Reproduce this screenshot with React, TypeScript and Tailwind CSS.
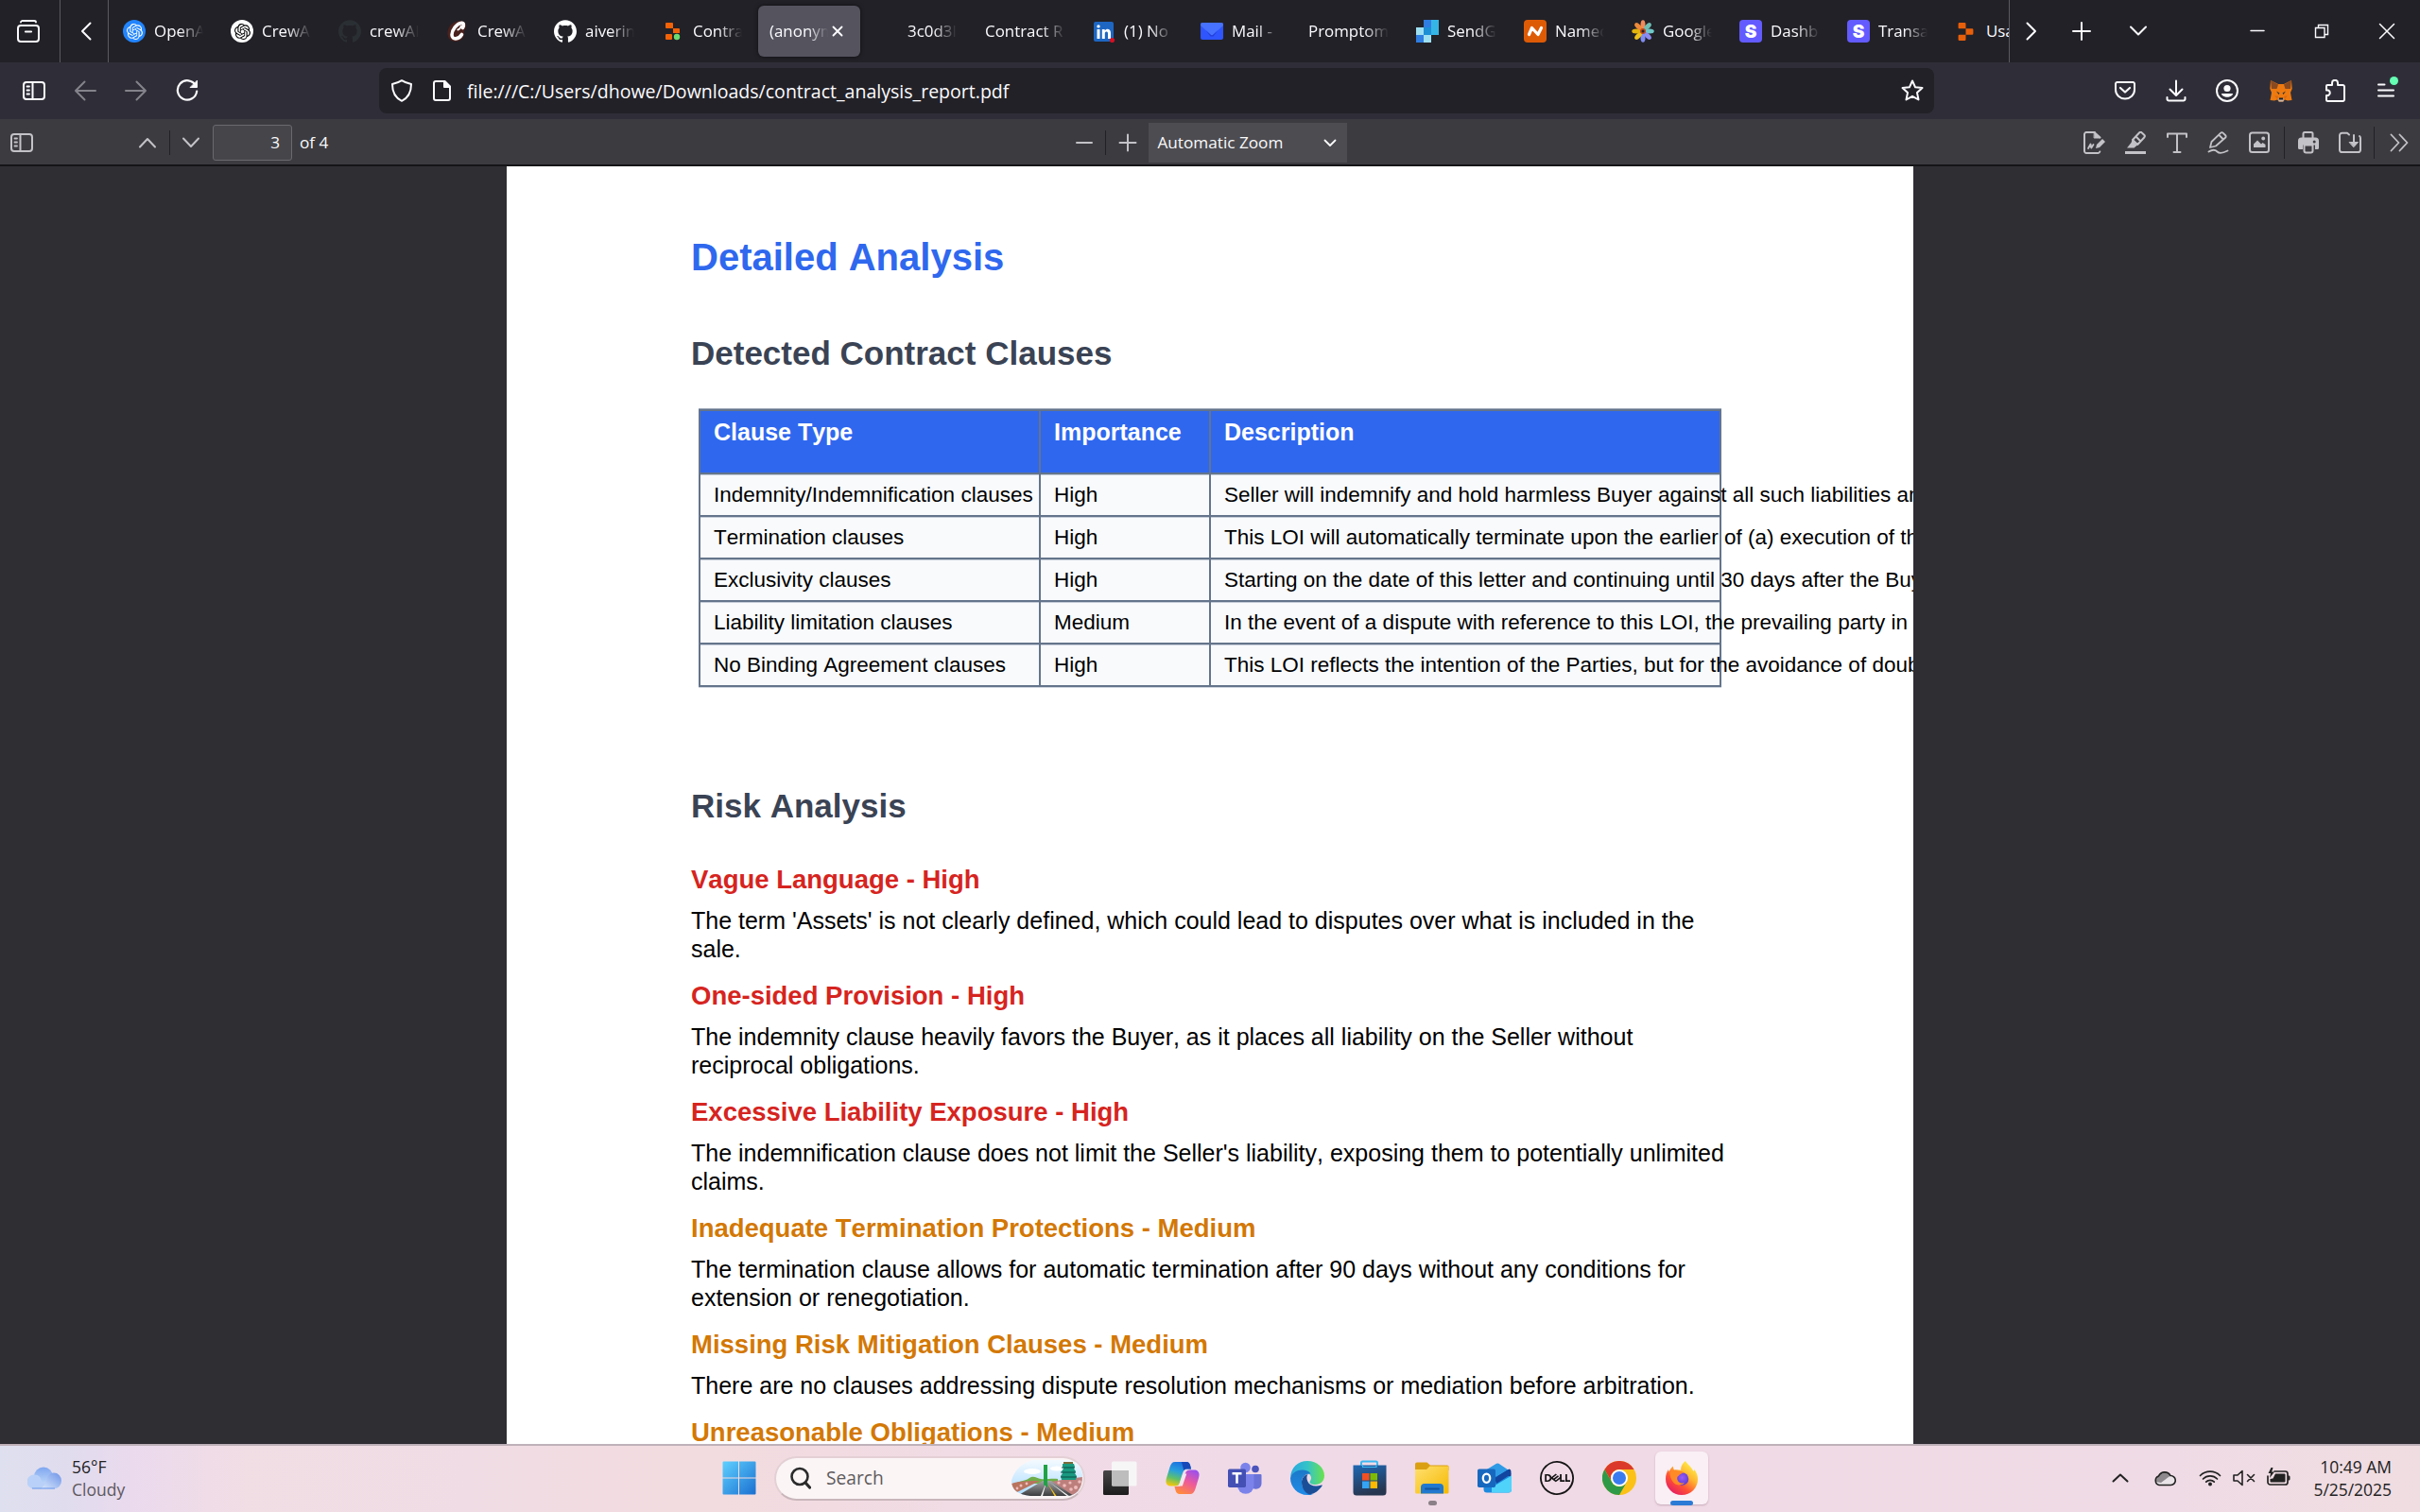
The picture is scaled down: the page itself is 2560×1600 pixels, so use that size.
import React from "react";
import { SiOpenai, SiDell, SiReplit, SiGithub } from "react-icons/si";

type SvgProps = {
  w?: number;
  h?: number;
  vb?: string;
  className?: string;
  children: React.ReactNode;
};

/* Stroke-based glyph on a pixel grid, coloured through currentColor */
function Glyph({ w = 24, h = 24, vb, className = "", children }: SvgProps) {
  return (
    <svg
      width={w}
      height={h}
      viewBox={vb ?? `0 0 ${w} ${h}`}
      className={`shrink-0 ${className}`}
      fill="none"
      stroke="currentColor"
      strokeWidth="2"
      strokeLinecap="round"
      strokeLinejoin="round"
    >
      {children}
    </svg>
  );
}

/* ------------------------------ favicons ------------------------------ */

function ContractFav() {
  return (
    <Glyph className="-ml-0.5">
      <g stroke="none">
        <path d="M7 3h6a1 1 0 0 1 1 1v5H7a1 1 0 0 1-1-1V4a1 1 0 0 1 1-1z" fill="#f26207" />
        <path d="M14 9h6a1 1 0 0 1 1 1v4h-7z" fill="#f26207" />
        <rect x="6" y="15" width="7" height="6" rx="1" fill="#f26207" />
        <circle cx="18" cy="18" r="3.2" fill="#6bdc6f" />
      </g>
    </Glyph>
  );
}

function CrewFav() {
  return (
    <span className="flex size-6 items-center justify-center">
      <Glyph>
        <path d="M8 3C13 0 21 .5 21 6c0 3-2 4-2 7s0 7-6 9.500C7 24 1.500 21 1.500 15S4 5.500 8 3z" fill="#4a211d" stroke="none" />
        <path d="M17.500 8.500c1.600-3 1-5.500-1.200-5.300C11 3.700 6 11 6 15.800c0 6 7.500 5 10.500-.3" stroke="#fff" strokeWidth="3.600" />
        <path d="M16 6.500c-.8 2-2.400 3.600-3.600 4" stroke="#fff" strokeWidth="2" />
      </Glyph>
    </span>
  );
}

function LinkedInFav() {
  return (
    <Glyph>
      <g stroke="none">
        <rect x="1" y="2" width="21" height="21" rx="2" fill="#1d66c2" />
        <path d="M4.500 10h3v10h-3zM6 5.200a1.700 1.700 0 1 1 0 3.400 1.700 1.700 0 0 1 0-3.400zM9.800 10h2.900v1.400c1.700-2.500 6.300-2.200 6.300 2.300V20h-3v-5.600c0-2.600-3.200-2.300-3.200 0V20h-3z" fill="#fff" />
        <circle cx="20.500" cy="21.500" r="2.600" fill="#d11124" />
      </g>
    </Glyph>
  );
}

function MailFav() {
  return (
    <Glyph>
      <g stroke="none">
        <rect x="0" y="3" width="24" height="18" rx="2" fill="#2f55ff" />
        <path d="M2 3h20a2 2 0 0 1 2 2v1L13.500 15.500a2 2 0 0 1-3 0L0 6V5a2 2 0 0 1 2-2z" fill="#4672ff" />
        <path d="M5.500 11l5 4.500a2 2 0 0 0 3 0l5-4.500-5 6.500h-3z" fill="#2340d6" />
      </g>
    </Glyph>
  );
}

function SendGridFav() {
  return (
    <Glyph>
      <g stroke="none">
        <path d="M8 0h8v8H8z" fill="#2f7de1" />
        <path d="M16 0h8v8h-8z" fill="#35b5e6" />
        <path d="M0 8h8v8H0z" fill="#9fdff2" />
        <path d="M8 8h8v8H8z" fill="#1c8fd6" />
        <path d="M16 8h8v8h-8z" fill="#35b5e6" />
        <path d="M0 16h8v8H0z" fill="#2f7de1" />
        <path d="M8 16h8v8H8z" fill="#9fdff2" />
      </g>
    </Glyph>
  );
}

function NamecheapFav() {
  return (
    <Glyph>
      <rect width="24" height="24" rx="4" fill="#de5b06" stroke="none" />
      <path d="M5.500 15.500 8.500 8.500l6.500 7L18.500 8.500" stroke="#fff" strokeWidth="3.200" />
    </Glyph>
  );
}

const petals = ["#f28b5a", "#6fbfb4", "#6fc7c9", "#8c8cf0", "#7f8cf2", "#eec21b", "#e3b40c", "#ee8a3a"];

function PetalsFav() {
  return (
    <Glyph>
      <g stroke="none">
        {petals.map((c, i) => (
          <ellipse key={i} cx="12" cy="5" rx="2.500" ry="4.800" fill={c} transform={`rotate(${i * 45} 12 12)`} />
        ))}
        <circle cx="12" cy="12" r="3" fill="#c2491d" />
        <circle cx="12" cy="12" r="1.500" fill="#222127" />
      </g>
    </Glyph>
  );
}

function StripeFav() {
  return (
    <span className="flex size-6 items-center justify-center rounded bg-[#635bff] font-['Inter',sans-serif] text-[19px] leading-none font-black text-white">
      S
    </span>
  );
}

/* -------------------------------- tabs -------------------------------- */

type TabInfo = { label: string; icon?: React.ReactNode; gap?: boolean };

const leftTabs: TabInfo[] = [
  {
    label: "OpenAI",
    icon: (
      <span className="flex size-6 items-center justify-center rounded-full bg-[#2285ff]">
        <SiOpenai className="size-[17px] text-white" />
      </span>
    ),
  },
  {
    label: "CrewAI",
    icon: (
      <span className="flex size-6 items-center justify-center rounded-full bg-white">
        <SiOpenai className="size-[17px] text-black" />
      </span>
    ),
  },
  { label: "crewAI", icon: <SiGithub className="size-6 text-[#2a2f34]" /> },
  { label: "CrewAI", icon: <CrewFav /> },
  { label: "aiverin", icon: <SiGithub className="size-6 text-white" /> },
  { label: "Contrac", icon: <ContractFav /> },
];

const rightTabs: TabInfo[] = [
  { label: "3c0d3l", gap: true },
  { label: "Contract R" },
  { label: "(1) No", icon: <LinkedInFav /> },
  { label: "Mail -", icon: <MailFav /> },
  { label: "Promptom" },
  { label: "SendG", icon: <SendGridFav /> },
  { label: "Namec", icon: <NamecheapFav /> },
  { label: "Google", icon: <PetalsFav /> },
  { label: "Dashb", icon: <StripeFav /> },
  { label: "Transa", icon: <StripeFav /> },
];

function Tab({ label, icon, gap }: TabInfo) {
  return (
    <div className="flex h-full w-[114px] shrink-0 items-center pl-3">
      {icon && <div className="mr-[9px] flex w-6 shrink-0">{icon}</div>}
      {gap && <div className="w-8 shrink-0" />}
      <span
        className={
          icon || gap
            ? "w-[52px] overflow-hidden whitespace-nowrap [mask-image:linear-gradient(to_right,black_52%,transparent)]"
            : "w-[85px] overflow-hidden whitespace-nowrap [mask-image:linear-gradient(to_right,black_70%,transparent)]"
        }
      >
        {label}
      </span>
    </div>
  );
}

function TabBar() {
  return (
    <div className="flex h-[66px] items-center bg-[#222127] text-[16.900px] text-[#fbfbfe]">
      <Glyph className="ml-[18px]">
        <path d="M4 2.500C4 1.500 5 1 6 1h12c1 0 2 .5 2 1.500" strokeWidth="1.800" />
        <rect x="1" y="6" width="22" height="17" rx="3" />
        <path d="M9 12.500h6" strokeWidth="2.200" />
      </Glyph>
      <div className="ml-[21px] h-full w-px bg-[#5b5a62]" />
      <Glyph w={12} h={20} className="ml-[21px]">
        <path d="M10.500 1.500 2 10l8.500 8.500" />
      </Glyph>
      <div className="ml-[17px] h-full w-px bg-[#5b5a62]" />
      <div className="flex h-full w-[2010px] shrink-0 overflow-hidden pl-[3px]">
        {leftTabs.map((t, i) => (
          <Tab key={i} {...t} />
        ))}
        <div className="flex h-full w-[114px] shrink-0 items-center">
          <div className="flex h-[54px] w-[108px] items-center rounded-md bg-[#54535e] pl-3 shadow-[0_0_4px_rgba(0,0,0,0.6)]">
            <span className="w-[62px] overflow-hidden whitespace-nowrap [mask-image:linear-gradient(to_right,black_65%,transparent)]">
              (anonym
            </span>
            <Glyph w={12} h={12} className="ml-1">
              <path d="M1.500 1.500l9 9M10.500 1.500l-9 9" strokeWidth="1.900" />
            </Glyph>
          </div>
        </div>
        {rightTabs.map((t, i) => (
          <Tab key={i} {...t} />
        ))}
        <div className="flex h-full w-[114px] shrink-0 items-center pl-3">
          <SiReplit className="mr-[12px] ml-[2px] size-[19px] shrink-0 text-[#e85f0a]" />
          <span className="whitespace-nowrap">Usag</span>
        </div>
      </div>
      <div className="h-full w-px bg-[#5b5a62]" />
      <Glyph w={12} h={20} className="ml-[17px]">
        <path d="M1.500 1.500 10 10l-8.500 8.500" />
      </Glyph>
      <Glyph w={20} h={20} className="ml-[37px]">
        <path d="M10 1v18M1 10h18" />
      </Glyph>
      <Glyph w={20} h={12} className="ml-[40px]">
        <path d="M2 1.500l8 8 8-8" />
      </Glyph>
      <Glyph w={16} h={16} className="ml-[108px]">
        <path d="M1 7.500h14" strokeWidth="1.500" />
      </Glyph>
      <Glyph w={16} h={16} className="ml-[52px]">
        <path d="M1.500 4.500h9.500v10H1.500zM4.500 4V1.500H14.500v10h-3" strokeWidth="1.400" strokeLinecap="butt" strokeLinejoin="miter" />
      </Glyph>
      <Glyph w={18} h={18} className="ml-[52px]">
        <path d="M1.500 1.500l15 15M16.500 1.500l-15 15" strokeWidth="1.500" />
      </Glyph>
    </div>
  );
}

/* ----------------------------- navigation ----------------------------- */

function SidebarIcon({ className = "" }: { className?: string }) {
  return (
    <Glyph w={24} h={20} className={className}>
      <rect x="1" y="1" width="22" height="18" rx="3" />
      <path d="M10.500 1v18" />
      <path d="M4.500 5.500h2.500M4.500 9.500h2.500M4.500 13.500h2.500" strokeWidth="1.800" />
    </Glyph>
  );
}

function MetaMaskIcon() {
  return (
    <Glyph>
      <g stroke="none">
        <path d="M1 1 9 5h6l8-4 .7 9L22 14l1.500 8-4.500.5-3-1-2 2h-4l-2-2-3 1L.5 22 2 14 .3 10z" fill="#ee7a10" />
        <path d="M1 1 9 5.500 7.500 10 2 10zM23 1 15 5.500l1.500 4.500h5.500z" fill="#8a4a20" />
        <path d="M7 12.500l3.500 2-1 1.500zM17 12.500l-3.500 2 1 1.500z" fill="#2b3440" />
        <path d="M5 17l4 1-1 3zM19 17l-4 1 1 3z" fill="#d96a12" />
        <path d="M9 20h6l-.5 3.500h-5z" fill="#c9b8ab" />
        <path d="M10 19.500h4l.4 2H9.600z" fill="#1d1f24" />
      </g>
    </Glyph>
  );
}

function NavBar() {
  return (
    <div className="flex h-[60px] items-center bg-[#2f2e38] text-[#fbfbfe]">
      <SidebarIcon className="ml-6" />
      <Glyph className="ml-[30px] text-[#84838b]">
        <path d="M23 12H2M11.500 2.500 2 12l9.500 9.500" />
      </Glyph>
      <Glyph className="ml-[30px] text-[#84838b]">
        <path d="M1 12h21M12.500 2.500 22 12l-9.500 9.500" />
      </Glyph>
      <Glyph className="ml-[30px]">
        <path d="M21 6.500A10.200 10.200 0 1 0 22.200 12.500" strokeWidth="2.200" />
        <path d="M22.500 1.500v7h-7z" fill="currentColor" strokeWidth="1" />
      </Glyph>
      <div className="ml-[191px] flex h-12 w-[1645px] shrink-0 items-center rounded-lg bg-[#222127]">
        <Glyph className="ml-3">
          <path d="M12 1.200c3 2 6 3 10 3.800 0 8-3 14.500-10 17.800C5 19.500 2 13 2 5c4-.8 7-1.800 10-3.800z" />
        </Glyph>
        <Glyph className="ml-[18px]">
          <path d="M6 2h9.500L21 7.500V20a2 2 0 0 1-2 2H6a2 2 0 0 1-2-2V4a2 2 0 0 1 2-2z" />
          <path d="M15 2v6h6z" fill="currentColor" />
        </Glyph>
        <span className="ml-[15px] pt-0.5 text-[19.560px] whitespace-nowrap">
          file:///C:/Users/dhowe/Downloads/contract_analysis_report.pdf
        </span>
        <Glyph className="mr-[11px] ml-auto">
          <path d="M12 1.500l3.100 6.800 7.400.8-5.500 5 1.500 7.400L12 17.800l-6.500 3.700L7 14.100l-5.500-5 7.400-.8z" />
        </Glyph>
      </div>
      <div className="ml-[175px] flex items-center">
        <div className="flex w-[54px] justify-center">
          <Glyph>
            <path d="M3.500 3h17A1.800 1.800 0 0 1 22 4.500V11a10 9.500 0 0 1-20 0V4.500A1.800 1.800 0 0 1 3.500 3z" />
            <path d="M7 9l5 4.500L17 9" strokeWidth="2.200" />
          </Glyph>
        </div>
        <div className="flex w-[54px] justify-center">
          <Glyph>
            <path d="M12 1.500v15M5.500 10.500l6.500 6.500 6.500-6.500M2.500 19v1.500A1.800 1.800 0 0 0 4.500 22.500h15a1.800 1.800 0 0 0 2-2V19" />
          </Glyph>
        </div>
        <div className="flex w-[54px] justify-center">
          <Glyph>
            <circle cx="12" cy="12" r="11" />
            <circle cx="12" cy="9.500" r="3.600" fill="currentColor" stroke="none" />
            <path d="M6 15h12c0 2-3 3.800-6 3.800S6 17 6 15z" fill="currentColor" stroke="none" />
          </Glyph>
        </div>
        <div className="flex w-[60px] justify-center">
          <MetaMaskIcon />
        </div>
        <div className="flex w-[54px] justify-center">
          <Glyph>
            <path d="M4 6h5V3.800a3 3 0 0 1 6 0V6h5a1.800 1.800 0 0 1 2 2v13a1.800 1.800 0 0 1-2 2H4.500A1.500 1.500 0 0 1 3 21.500V17h2a3 3 0 0 0 0-5.500H3V7a1 1 0 0 1 1-1z" />
          </Glyph>
        </div>
        <div className="relative flex w-[54px] justify-center">
          <Glyph>
            <path d="M4 5.500h6.500M4 11.500h16M4 17.500h16" />
          </Glyph>
          <span className="absolute -top-[3px] right-[14px] size-[9px] rounded-full bg-[#65ffb4]" />
        </div>
      </div>
    </div>
  );
}

/* ----------------------------- pdf toolbar ---------------------------- */

function PdfToolbar() {
  return (
    <div className="flex h-[50px] items-center border-b-2 border-[#151417] bg-[#3c3b40] pt-0.5 text-[17.200px] text-[#f9f9fa]">
      <SidebarIcon className="ml-[11px] text-[#c3c2c6]" />
      <Glyph w={20} h={12} className="ml-[111px] text-[#c3c2c6]">
        <path d="M2 10.500l8-8.500 8 8.500" />
      </Glyph>
      <div className="ml-[13px] h-[26px] w-px bg-[#222127]" />
      <Glyph w={20} h={12} className="ml-[12px] text-[#c3c2c6]">
        <path d="M2 1.500l8 8.500 8-8.500" />
      </Glyph>
      <div className="ml-[13px] flex h-[38px] w-[84px] items-center justify-end rounded-[3px] border border-[#6a696e] bg-[#46454a] pr-3">3</div>
      <span className="ml-2">of 4</span>
      <Glyph w={20} h={20} className="ml-[790px] text-[#c3c2c6]">
        <path d="M2 10h16" />
      </Glyph>
      <div className="ml-[12px] h-[26px] w-px bg-[#222127]" />
      <Glyph w={20} h={20} className="ml-[13px] text-[#c3c2c6]">
        <path d="M10 1.500v17M1.500 10h17" />
      </Glyph>
      <div className="ml-[12px] flex h-[42px] w-[210px] items-center bg-[#4d4c51] pr-[11px] pl-[9px]">
        <span>Automatic Zoom</span>
        <Glyph w={14} h={9} className="ml-auto">
          <path d="M1.500 1.500l5.500 5.500 5.500-5.500" strokeWidth="1.800" />
        </Glyph>
      </div>
      <div className="mr-[12px] ml-auto flex items-center text-[#c3c2c6]">
        {/* signature */}
        <Glyph>
          <path d="M12 1H3.500A2.300 2.300 0 0 0 1 3.500v17A2.300 2.300 0 0 0 3.500 23H15a2.300 2.300 0 0 0 2.300-1.500M11.500 1l6 5.500" />
          <path d="M11.500 1l6 6h-6z" fill="currentColor" strokeWidth="1" />
          <path d="M5 18l2.500-4.500.8 4L10.500 14" strokeWidth="1.800" />
          <path d="M13 18l1-4 6-6 3 3-6 6z" fill="currentColor" stroke="none" />
        </Glyph>
        {/* highlight */}
        <Glyph className="ml-[19px]">
          <path d="M9 9l7-7.500a2 2 0 0 1 2.800 0l2.400 2.200a2 2 0 0 1 0 2.800l-7 7.500zM12.500 5.500l5 5" />
          <path d="M8.500 9l5.500 5.500-3.500 3H3l4.500-5.500z" fill="currentColor" stroke="none" />
          <path d="M1 22.500h22" strokeWidth="3" strokeLinecap="butt" />
        </Glyph>
        {/* text */}
        <Glyph className="ml-[20px]">
          <path d="M2 6V2.500h20V6M12 2.500v19M8.500 22h7" />
        </Glyph>
        {/* draw */}
        <Glyph className="ml-[20px]">
          <path d="M3 17l1.500-6L14 1.800a2 2 0 0 1 2.800 0l2.200 2.200a2 2 0 0 1 0 2.800L9 15.500zM12.500 4l4.500 4.500" strokeWidth="1.800" />
          <path d="M1.500 21.500c4-2.500 7-2 9 0s6 1.500 11-1" strokeWidth="1.800" />
        </Glyph>
        {/* image */}
        <Glyph className="ml-[19px]">
          <rect x="2" y="1.500" width="20" height="20.500" rx="2.500" />
          <path d="M6 17v-3.500l4-4 4 4 1.500-1.500L18.500 14v3z" fill="currentColor" stroke="none" />
          <circle cx="16.200" cy="7.500" r="1.900" fill="currentColor" stroke="none" />
        </Glyph>
        <div className="ml-[14px] h-[34px] w-px bg-[#222127]" />
        {/* print */}
        <Glyph className="ml-[13px]">
          <path d="M6.500 8V2.500A1.500 1.500 0 0 1 8 1h7a1.500 1.500 0 0 1 1.500 1.500V8" />
          <path d="M4.500 6.500h15A3.500 3.500 0 0 1 23 10v7.500a1.500 1.500 0 0 1-1.500 1.500h-2.500v-4.500H6V19H2.500A1.500 1.500 0 0 1 1 17.500V10a3.500 3.500 0 0 1 3.500-3.500z" fill="currentColor" stroke="none" />
          <path d="M7.500 14.500h9v6a2 2 0 0 1-2 2h-5a2 2 0 0 1-2-2z" />
          <circle cx="18.200" cy="11" r="1.500" fill="#3c3b40" stroke="none" />
        </Glyph>
        {/* save */}
        <Glyph className="ml-[20px]">
          <path d="M11 3.500 9 1.800H3.500A2.500 2.500 0 0 0 1 4.300v15.500A2.500 2.500 0 0 0 3.500 22h17a2.500 2.500 0 0 0 2.500-2.200V7a2.500 2.500 0 0 0-1-2" />
          <path d="M16 4v10" />
          <path d="M11.500 11.500h9L16 16.500z" fill="currentColor" strokeWidth="1" />
        </Glyph>
        <div className="ml-[13px] h-[34px] w-px bg-[#222127]" />
        <Glyph w={20} h={20} className="ml-4">
          <path d="M1.500 1.500 9.500 10l-8 8.500M10.500 1.500l8 8.500-8 8.500" strokeWidth="1.800" />
        </Glyph>
      </div>
    </div>
  );
}

/* ------------------------------ document ------------------------------ */

const clauses = [
  ["Indemnity/Indemnification clauses", "High", "Seller will indemnify and hold harmless Buyer against all such liabilities and"],
  ["Termination clauses", "High", "This LOI will automatically terminate upon the earlier of (a) execution of the"],
  ["Exclusivity clauses", "High", "Starting on the date of this letter and continuing until 30 days after the Buyer"],
  ["Liability limitation clauses", "Medium", "In the event of a dispute with reference to this LOI, the prevailing party in"],
  ["No Binding Agreement clauses", "High", "This LOI reflects the intention of the Parties, but for the avoidance of doubt"],
];

type Risk = { title: string; level: "High" | "Medium"; lines: string[] };

const risks: Risk[] = [
  { title: "Vague Language", level: "High", lines: ["The term 'Assets' is not clearly defined, which could lead to disputes over what is included in the", "sale."] },
  { title: "One-sided Provision", level: "High", lines: ["The indemnity clause heavily favors the Buyer, as it places all liability on the Seller without", "reciprocal obligations."] },
  { title: "Excessive Liability Exposure", level: "High", lines: ["The indemnification clause does not limit the Seller's liability, exposing them to potentially unlimited", "claims."] },
  { title: "Inadequate Termination Protections", level: "Medium", lines: ["The termination clause allows for automatic termination after 90 days without any conditions for", "extension or renegotiation."] },
  { title: "Missing Risk Mitigation Clauses", level: "Medium", lines: ["There are no clauses addressing dispute resolution mechanisms or mediation before arbitration."] },
  { title: "Unreasonable Obligations", level: "Medium", lines: [] },
];

function ClauseTable() {
  return (
    <div className="mt-[38px] ml-2 w-[1082px] border-t-2 border-l-2 border-[#64748b] shadow-[0_-1px_0_#9aa5b5,0_1px_0_#cfd6df]">
      <div className="grid h-[67px] grid-cols-[360px_180px_540px] border-b-2 border-[#64748b] bg-[#2f68ee] text-[25px] leading-[30px] font-bold text-white">
        {["Clause Type", "Importance", "Description"].map((h) => (
          <div key={h} className="border-r-2 border-[#64748b] pt-[7px] pl-3.5">
            {h}
          </div>
        ))}
      </div>
      {clauses.map((row) => (
        <div key={row[0]} className="grid h-[45px] grid-cols-[360px_180px_540px] border-b-2 border-[#64748b] bg-[#f8fafc] text-[22.500px] leading-[44px] text-black shadow-[inset_0_1px_0_#c6cdd8]">
          {row.map((cell, i) => (
            <div key={i} className="border-r-2 border-[#64748b] pl-3.5 whitespace-nowrap">
              {cell}
            </div>
          ))}
        </div>
      ))}
    </div>
  );
}

function Page() {
  return (
    <div className="ml-[536px] h-[1352px] w-[1488px] overflow-hidden bg-white pl-[195px] font-['Liberation_Sans',Arial,sans-serif] [font-kerning:none]">
      <h1 className="mt-[72px] text-[40px] leading-[48px] font-bold text-[#2f68ee]">Detailed Analysis</h1>
      <h2 className="mt-[57px] text-[35px] leading-[42px] font-bold text-[#3a4354]">Detected Contract Clauses</h2>
      <ClauseTable />
      <h2 className="mt-[105px] mb-[40px] text-[35px] leading-[42px] font-bold text-[#3a4354]">Risk Analysis</h2>
      {risks.map((r) => (
        <section key={r.title} className="mb-[18px]">
          <h3
            className={
              r.level === "High"
                ? "mb-3 text-[27.500px] leading-[33px] font-bold text-[#d62420]"
                : "mb-3 text-[27.500px] leading-[33px] font-bold text-[#d37805]"
            }
          >
            {r.title} - {r.level}
          </h3>
          {r.lines.map((l) => (
            <p key={l} className="text-[25px] leading-[30px] whitespace-nowrap text-black">
              {l}
            </p>
          ))}
        </section>
      ))}
    </div>
  );
}

/* ------------------------------- taskbar ------------------------------ */

function WeatherCloud() {
  return (
    <svg width="36" height="24" viewBox="0 0 36 24" className="shrink-0">
      <defs>
        <linearGradient id="wc1" x1="0" y1="0" x2="0" y2="1">
          <stop offset="0" stopColor="#7fa6f0" />
          <stop offset="1" stopColor="#c3dcfa" />
        </linearGradient>
        <linearGradient id="wc2" x1="1" y1="0" x2="0" y2="1">
          <stop offset="0" stopColor="#6d94e8" />
          <stop offset="1" stopColor="#dbe9fc" />
        </linearGradient>
      </defs>
      <circle cx="17" cy="10.500" r="10" fill="url(#wc1)" />
      <path d="M7 8.500c5 0 8 3 8 8h12v7H7a7.500 7.500 0 0 1 0-15z" fill="#b9d1f8" />
      <path d="M28 6.500a8 8.500 0 0 1 0 17H14c3-3 5-5 6-9 1-5 4-8 8-8z" fill="url(#wc2)" />
      <path d="M5 23h24" stroke="#7aa0ec" strokeWidth="1.200" />
    </svg>
  );
}

function WindowsLogo() {
  return (
    <svg width="36" height="36" viewBox="0 0 36 36" className="shrink-0">
      <defs>
        <linearGradient id="win" x1="0" y1="0" x2="1" y2="1">
          <stop offset="0" stopColor="#5fd0ff" />
          <stop offset="1" stopColor="#1a6fd0" />
        </linearGradient>
      </defs>
      <path d="M1.500.5H17v17H.5v-16a1 1 0 0 1 1-1zM18 .5h16.500a1 1 0 0 1 1 1v16H18zM.5 18.500H17v17H1.500a1 1 0 0 1-1-1zM18 18.500h17.500v16a1 1 0 0 1-1 1H18z" fill="url(#win)" />
    </svg>
  );
}

function SearchScene() {
  return (
    <svg width="76" height="38" viewBox="0 0 76 38" className="shrink-0">
      <defs>
        <clipPath id="scene">
          <path d="M22 0h35q17 0 18 16 0 22-18 22H20Q0 36 0 22 4 6 22 0z" />
        </clipPath>
        <linearGradient id="sky" x1="0" y1="0" x2="0" y2="1">
          <stop offset="0" stopColor="#f4faff" />
          <stop offset="1" stopColor="#a9dbff" />
        </linearGradient>
        <linearGradient id="road" x1="0" y1="0" x2="0" y2="1">
          <stop offset="0" stopColor="#a3a5a6" />
          <stop offset="1" stopColor="#3b3c3d" />
        </linearGradient>
      </defs>
      <g clipPath="url(#scene)">
        <rect width="76" height="38" fill="url(#sky)" />
        <ellipse cx="22" cy="12" rx="9" ry="3" fill="#fff" />
        <ellipse cx="48" cy="9" rx="7" ry="2.500" fill="#fff" />
        <path d="M4 25c6-4 10-2 15-6 4-3 8 0 12 1s12-1 18 0v5H4z" fill="#6fae4a" />
        <path d="M0 25c8-3 18-3 30-3L6 34H0z" fill="#b9745e" />
        <path d="M42 23c12-2 24-4 34-5v20H62z" fill="#bd7f7c" />
        <g fill="#f0bcbc">
          <circle cx="50" cy="24" r="1.600" /><circle cx="56" cy="27" r="1.800" /><circle cx="62" cy="24" r="1.600" /><circle cx="68" cy="29" r="2" /><circle cx="72" cy="23" r="1.800" /><circle cx="63" cy="31" r="1.800" />
          <circle cx="10" cy="27" r="1.500" /><circle cx="16" cy="25" r="1.400" /><circle cx="6" cy="30" r="1.400" />
        </g>
        <path d="M33 22h9l24 16H6z" fill="url(#road)" />
        <path d="M37 23 31 38h2zM41 24l20 14h-2.500z" fill="#f4f4f4" />
        <path d="M38.500 25l7 13h2z" fill="#f5c518" />
        <path d="M34 5h4v24l-4-3z" fill="#1fa245" />
        <path d="M54 4h12l1 3-1 2 2 3-1 2 2 3-1 4H53l-1-4 2-3-1-2 2-3-1-2z" fill="#1a9a80" />
        <path d="M53 8h14M52 13h16M52 18h17" stroke="#0b4f49" strokeWidth="1.200" />
        <path d="M55 2h10v2H55z" fill="#7a6a3a" />
      </g>
    </svg>
  );
}

function TaskView() {
  return (
    <svg width="36" height="36" viewBox="0 0 36 36">
      <defs>
        <linearGradient id="tv" x1="0" y1="0" x2="0" y2="1">
          <stop offset="0" stopColor="#474747" />
          <stop offset="1" stopColor="#1c1c1c" />
        </linearGradient>
      </defs>
      <rect x="0" y="10" width="27" height="26" rx="1.500" fill="url(#tv)" />
      <rect x="9" y="0.500" width="26.500" height="26" rx="1.500" fill="#f6f6f6" />
      <path d="M9 10h18v16.500H10.500A1.500 1.500 0 0 1 9 25z" fill="#bdbdbd" />
    </svg>
  );
}

function Copilot() {
  return (
    <svg width="36" height="36" viewBox="0 0 36 36">
      <defs>
        <linearGradient id="cp1" x1=".6" y1="0" x2=".3" y2="1">
          <stop offset="0" stopColor="#1a6fe0" />
          <stop offset=".4" stopColor="#28a0dc" />
          <stop offset=".7" stopColor="#5fc06a" />
          <stop offset="1" stopColor="#f2c70c" />
        </linearGradient>
        <linearGradient id="cp2" x1=".8" y1="0" x2=".3" y2="1">
          <stop offset="0" stopColor="#9a4ff0" />
          <stop offset=".5" stopColor="#ee5a9a" />
          <stop offset="1" stopColor="#ff8a3c" />
        </linearGradient>
      </defs>
      <path d="M10 1h12c2.500 0 3.500 1.500 4.200 4L27 8.500h-4c-3 0-4 1.500-5 4.500l-3 9.500c-1 3-2 4-5 4H6c-5 0-6.500-3.500-5-8.500L4.500 6.500C5.600 3 7 1 10 1z" fill="url(#cp1)" />
      <path d="M26 35H15c-2.500 0-3.800-1.500-4.500-4L9.500 27h3c3 0 4.500-1.500 5.500-4.500l3-9.500c1-3 2.500-3.500 5-3.500h4c5 0 6.500 3.500 5 8.500l-3.500 11.500C30.400 33 29 35 26 35z" fill="url(#cp2)" />
      <path d="M17 1h5c2.500 0 3.500 1.500 4.200 4L27 8.500h-4c-2 0-3 .5-3.800 1.500z" fill="#1749b8" />
      <path d="M18.500 13.500h3.800l-4.500 13h-4z" fill="#f3e6f0" />
    </svg>
  );
}

function Teams() {
  return (
    <svg width="36" height="36" viewBox="0 0 36 36">
      <circle cx="29" cy="8.500" r="3.800" fill="#4b53bc" />
      <circle cx="18.500" cy="7" r="5.300" fill="#7b83eb" />
      <path d="M23 14h11.500a1 1 0 0 1 1 1v9a6 6 0 0 1-9 5z" fill="#6a72d8" />
      <path d="M10 14h17.500v12a8.700 8.700 0 0 1-17.500 0z" fill="#7b83eb" />
      <rect x="0" y="8.500" width="19" height="19.500" rx="1.800" fill="#4450b4" />
      <path d="M4.500 13.200h10M9.500 13.200v10.500" stroke="#fff" strokeWidth="2.600" />
    </svg>
  );
}

function Edge() {
  return (
    <svg width="36" height="36" viewBox="0 0 36 36">
      <defs>
        <linearGradient id="ed1" x1="0" y1=".5" x2="1" y2=".5">
          <stop offset="0" stopColor="#2aa7e0" />
          <stop offset=".5" stopColor="#35c3c8" />
          <stop offset="1" stopColor="#6ae34c" />
        </linearGradient>
        <linearGradient id="ed2" x1="0" y1="0" x2="0" y2="1">
          <stop offset="0" stopColor="#1c78c8" />
          <stop offset="1" stopColor="#1f8ce8" />
        </linearGradient>
      </defs>
      <path d="M18 0c10.500 0 18 7.500 18 15.500 0 5.500-4 9.500-9.500 9.500-4.500 0-6.500-1.500-6-3 .5-1.200 1.500-2 1.500-4 0-4-4-6-8.500-6C7 12 1.500 15 .2 17 .6 7 8 0 18 0z" fill="url(#ed1)" />
      <path d="M0 18c1.500-5.500 7-8.500 12.500-8.500 4 0 7.500 1.500 9 4-5-.5-9.500 3-9.500 9 0 7 5 12.500 12 13-1.500.4-3.500.5-6 .5C8 36 0 28 0 18z" fill="url(#ed2)" />
      <path d="M12 22.500c0-4 2.500-7.500 6.500-8.500-1.500 2-1.500 5 0 8 2 4 7.500 6 14.500 3.500.6-.2 1 .2.6.8C30.500 31 26 35 20 35.500c-5-2-8-7-8-13z" fill="#1a4f98" />
    </svg>
  );
}

function Store() {
  return (
    <svg width="36" height="38" viewBox="0 0 36 38">
      <defs>
        <linearGradient id="st" x1="0" y1="0" x2="0.300" y2="1">
          <stop offset="0" stopColor="#1f68b4" />
          <stop offset="1" stopColor="#27364f" />
        </linearGradient>
      </defs>
      <path d="M9 7V3a1.500 1.500 0 0 1 1.500-1.500h14A1.500 1.500 0 0 1 26 3v4" fill="none" stroke="#3cb8f2" strokeWidth="2" />
      <path d="M.5 5.500h35V34a3.500 3.500 0 0 1-3.500 3.500H4A3.500 3.500 0 0 1 .5 34z" fill="url(#st)" />
      <path d="M9 5.500h1.500v2H25v-2" fill="none" stroke="#3cb8f2" strokeWidth="1.200" />
      <path d="M10 14h7.500v7.500H10z" fill="#f25022" />
      <path d="M18.500 14H26v7.500h-7.500z" fill="#7fba00" />
      <path d="M10 22.500h7.500V30H10z" fill="#35a4f2" />
      <path d="M18.500 22.500H26V30h-7.500z" fill="#ffb900" />
    </svg>
  );
}

function Explorer() {
  return (
    <svg width="36" height="34" viewBox="0 0 36 34">
      <defs>
        <linearGradient id="ex" x1="0" y1="0" x2="1" y2="1">
          <stop offset="0" stopColor="#ffe070" />
          <stop offset="1" stopColor="#f5b900" />
        </linearGradient>
      </defs>
      <path d="M0 2.500A2 2 0 0 1 2 .5h10.500L16 3.500h18a1.500 1.500 0 0 1 1.500 1.500v4H0z" fill="#dba012" />
      <path d="M0 8h12l3.500-3.500H35.500V32a1.500 1.500 0 0 1-1.500 1.500H1.500A1.500 1.500 0 0 1 0 32z" fill="url(#ex)" />
      <path d="M6 33.500V27a4 4 0 0 1 4-4h16a4 4 0 0 1 4 4v6.500z" fill="#2279cf" />
      <path d="M11 28.500h14" stroke="#14549c" strokeWidth="1.800" strokeLinecap="round" />
    </svg>
  );
}

function Outlook() {
  return (
    <svg width="36" height="32" viewBox="0 0 36 32">
      <path d="M6.500 9 20 .8a2.500 2.500 0 0 1 2.500 0L34 8.500V12L14 22H6.500z" fill="#2f9be6" />
      <path d="M18 16 33.500 6.500a3 3 0 0 1 2 3V14L22 22z" fill="#113f8f" />
      <path d="M6.500 14H36v14a3.500 3.500 0 0 1-3.500 3.500H10A3.500 3.500 0 0 1 6.500 28z" fill="#1d8ade" />
      <path d="M36 13.500V28a3.500 3.500 0 0 1-3.500 3.500H15V26z" fill="#4fd3fb" />
      <path d="M18 16 33 7l2.500 5L20 22z" fill="#1145a0" />
      <rect x="0" y="6.500" width="19" height="19.500" rx="1.800" fill="#1668bf" />
      <ellipse cx="9.500" cy="16.300" rx="3.700" ry="4.600" fill="none" stroke="#fff" strokeWidth="2.300" />
    </svg>
  );
}

function Chrome() {
  return (
    <svg width="36" height="36" viewBox="0 0 36 36">
      <circle cx="18" cy="18" r="18" fill="#fbc116" />
      <path d="M2.400 9A18 18 0 0 1 33.600 9H18a9 9 0 0 0-7.800 13.500z" fill="#db3a2b" />
      <path d="M2.400 9A18 18 0 0 0 18 36l7.800-13.500A9 9 0 0 1 10.200 22.500z" fill="#2e9a48" />
      <circle cx="18" cy="18" r="9" fill="#fff" />
      <circle cx="18" cy="18" r="7" fill="#3a7cf0" />
    </svg>
  );
}

function Firefox() {
  return (
    <svg width="36" height="36" viewBox="0 0 36 36">
      <defs>
        <linearGradient id="ff1" x1=".85" y1=".1" x2=".2" y2="1">
          <stop offset="0" stopColor="#fff04a" />
          <stop offset=".35" stopColor="#ffb32e" />
          <stop offset=".65" stopColor="#ff5034" />
          <stop offset="1" stopColor="#e3176a" />
        </linearGradient>
        <radialGradient id="ff2" cx=".5" cy=".4" r=".6">
          <stop offset="0" stopColor="#9a5cf5" />
          <stop offset="1" stopColor="#5a3ad0" />
        </radialGradient>
      </defs>
      <path d="M22 0c1 2 3 3.500 5.500 6.500 1.800 2 2.500 3.500 3 4.800l.6-2.300c2.600 3 3.900 6.500 3.900 10.200C35 28.500 27.500 36 18 36S1 28.500 1 19c0-4 1.200-7.500 3-10l.5 2.500C5.500 9.500 7 7 9 5.500c0 1.800.3 3 1.200 4 2.400-.6 5 0 7 .2C16.800 6 19 2 22 0z" fill="url(#ff1)" />
      <circle cx="18.500" cy="19" r="6.800" fill="url(#ff2)" />
      <path d="M5.500 12c2-2 5.500-2.800 8-1.500 2.500 0 4.500.3 6.500 1.500-2 1.500-4.500 1.800-5 3.500-2 1-2 3-1.500 4.500 1 3 4 4 7.500 3-2 3-9 3.500-12-.5-2.500-3-3.500-7-3.500-10.500z" fill="#ff8a26" />
    </svg>
  );
}

function TaskItem({ children }: { children: React.ReactNode }) {
  return <div className="flex h-full w-[66px] shrink-0 items-center justify-center">{children}</div>;
}

function Taskbar() {
  return (
    <div className="flex h-[72px] items-center border-t-2 border-[#bfb1b9] bg-[linear-gradient(90deg,#dfe0ef_0px,#e0dcee_70px,#ebdaee_140px,#f1dde4_260px,#f0dce4_500px,#f3dcdf_760px,#f1dbe4_1000px,#f0dae7_1300px,#f0dae5_1800px,#efdbe5_2300px,#f0dde1_2560px)] pb-0.5 text-[#222]">
      <div className="ml-[29px] flex w-[735px] shrink-0 items-center">
        <WeatherCloud />
        <div className="ml-[11px] text-[17.500px] leading-6">
          <div>56°F</div>
          <div className="text-[#5d585e]">Cloudy</div>
        </div>
      </div>
      <WindowsLogo />
      <div className="ml-[19px] flex h-[47px] w-[329px] shrink-0 items-center rounded-full border-2 border-[#e3d0d5] border-b-[#c8b6bb] bg-[#fbf5f6]">
        <Glyph w={22} h={24} className="ml-[15px] text-[#2b2b2b]">
          <circle cx="10" cy="10.500" r="8.500" strokeWidth="2.600" />
          <path d="M16 17l4.500 5" strokeWidth="3.200" />
        </Glyph>
        <span className="ml-4 text-[19.200px] text-[#5f5b5d]">Search</span>
        <div className="ml-auto">
          <SearchScene />
        </div>
      </div>
      <div className="ml-[4px] flex h-full shrink-0 items-center">
        <TaskItem><TaskView /></TaskItem>
        <TaskItem><Copilot /></TaskItem>
        <TaskItem><Teams /></TaskItem>
        <TaskItem><Edge /></TaskItem>
        <TaskItem><Store /></TaskItem>
        <TaskItem>
          <div className="relative">
            <Explorer />
            <span className="absolute -bottom-3 left-[14px] h-[5px] w-[9px] rounded-full bg-[#8b8087]" />
          </div>
        </TaskItem>
        <TaskItem><Outlook /></TaskItem>
        <TaskItem><SiDell className="size-9 text-[#151515]" /></TaskItem>
        <TaskItem><Chrome /></TaskItem>
        <TaskItem>
          <div className="relative flex h-[56px] w-[56px] items-center justify-center rounded-md bg-[#f9eff5] shadow-[0_1px_2px_rgba(120,80,100,0.35)]">
            <Firefox />
            <span className="absolute -bottom-px left-4 h-[5px] w-6 rounded-full bg-[#2b7bd6]" />
          </div>
        </TaskItem>
      </div>
      <Glyph w={18} h={10} className="ml-auto">
        <path d="M1.500 8.500 9 1.500l7.500 7" />
      </Glyph>
      <Glyph w={24} h={18} className="ml-[26px]">
        <path d="M6 16.500a5 5 0 0 1-.5-9.500A7 7 0 0 1 18 6.500a5 5 0 0 1 .5 10z" fill="#e9e4e7" stroke="none" />
        <path d="M5.500 7A7 7 0 0 1 18 6.500L8 14l-6-1z" fill="#8d898c" stroke="none" />
        <path d="M6 16.500a5 5 0 0 1-.5-9.500A7 7 0 0 1 18 6.500a5 5 0 0 1 .5 10z" strokeWidth="1.600" />
      </Glyph>
      <Glyph w={24} h={18} className="ml-6">
        <path d="M1.500 6.500a15 15 0 0 1 21 0M4.500 10a10.500 10.500 0 0 1 15 0M7.700 13.200a6 6 0 0 1 8.600 0" strokeWidth="1.700" />
        <circle cx="12" cy="15.500" r="2" fill="currentColor" stroke="none" />
      </Glyph>
      <Glyph w={24} h={18} className="ml-[12px]">
        <path d="M1 6v6h4l5 4.500V1.500L5 6zM15.500 5.500l7 7M22.500 5.500l-7 7" strokeWidth="1.600" />
      </Glyph>
      <Glyph w={26} h={22} className="ml-3">
        <path d="M8 4h11.500A2.500 2.500 0 0 1 22 6.500v9a2.500 2.500 0 0 1-2.500 2.500h-16A2.500 2.500 0 0 1 1 15.500V9" strokeWidth="1.700" />
        <path d="M9 6.500h9.500a1 1 0 0 1 1 1v7a1 1 0 0 1-1 1h-14a1 1 0 0 1-1-1V12l3-.5z" fill="currentColor" stroke="none" />
        <path d="M22.500 8.500h1a1.500 1.500 0 0 1 1 1.500v2a1.500 1.500 0 0 1-1 1.500h-1z" fill="currentColor" stroke="none" />
        <path d="M4.500 0 1.500 6h2.500L3 11l5-6.500H5.200L6.500 0z" fill="currentColor" stroke="none" />
      </Glyph>
      <div className="mr-[30px] w-[106px] text-right text-[17.450px] leading-6">
        <div>10:49 AM</div>
        <div>5/25/2025</div>
      </div>
    </div>
  );
}

export default function App() {
  return (
    <div className="flex h-[1600px] w-[2560px] flex-col overflow-hidden bg-[#2f2e33] font-['Open_Sans','Noto_Sans',sans-serif]">
      <TabBar />
      <NavBar />
      <PdfToolbar />
      <Page />
      <Taskbar />
    </div>
  );
}
